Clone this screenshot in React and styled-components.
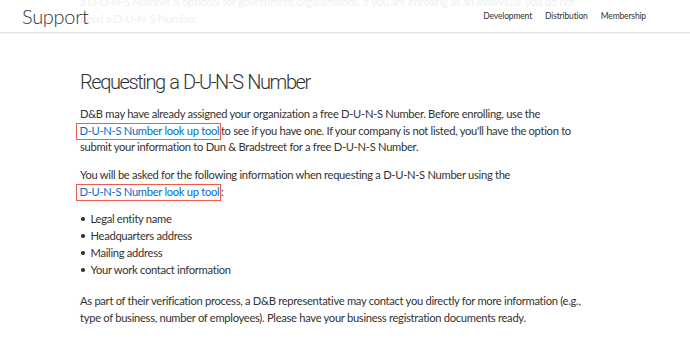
import styled, { createGlobalStyle } from "styled-components";

const GlobalStyle = createGlobalStyle`
  html, body {
    margin: 0;
    padding: 0;
    background: #fff;
  }
  body {
    font-family: "Lato", "Liberation Sans", sans-serif;
    color: #333;
  }
`;

const Page = styled.div`
  width: 690px;
  height: 359px;
  overflow: hidden;
  background: #fff;
`;

const Header = styled.header`
  position: relative;
  height: 32px;
  display: flex;
  align-items: center;
  justify-content: space-between;
  padding: 0 44px 0 22px;
  border-bottom: 1px solid #e3e3e3;
  box-shadow: 0 1px 1px rgba(0, 0, 0, 0.03);
  overflow: hidden;
`;

// page content scrolled up beneath the translucent bar
const GhostText = styled.div`
  position: absolute;
  left: 80px;
  top: -6px;
  font-size: 11.2px;
  letter-spacing: -0.3px;
  line-height: 16.5px;
  color: #f0f0f0;
  white-space: nowrap;
`;

const Brand = styled.div`
  position: relative;
  font-size: 20px;
  font-weight: 300;
  color: #333;
  letter-spacing: -0.3px;
`;

const Nav = styled.nav`
  position: relative;
  display: flex;
  gap: 13px;
  font-size: 8.5px;
  letter-spacing: -0.15px;
  color: #333;
`;

const Content = styled.main`
  padding: 34px 0 0 80px;
`;

const Title = styled.h1`
  margin: 0 0 9px;
  font-family: "Roboto", "Lato", sans-serif;
  font-size: 20px;
  font-weight: 300;
  line-height: 30px;
  letter-spacing: -1.4px;
  word-spacing: 1px;
  color: #333;
`;

const Para = styled.p`
  margin: 0 0 ${(p) => p.$gap || 11.5}px;
  font-size: 11.2px;
  letter-spacing: -0.3px;
  line-height: 16.5px;
  white-space: nowrap;
`;

const Link = styled.span`
  color: #0070c9;
  margin: 0 0 0 -4px;
  padding: 0 0.5px 2px 2.5px;
  border: 1.5px solid #ef5b4a;
`;

const List = styled.ul`
  margin: 0 0 15px;
  padding: 0;
  list-style: none;
  font-size: 11.2px;
  letter-spacing: -0.3px;
  line-height: 17px;
`;

const Item = styled.li`
  display: flex;
  align-items: center;
`;

const Dot = styled.span`
  width: 3.5px;
  height: 3.5px;
  margin: 1px 6px 0 1px;
  border-radius: 50%;
  background: #333;
`;

export default function App() {
  const items = [
    "Legal entity name",
    "Headquarters address",
    "Mailing address",
    "Your work contact information",
  ];

  return (
    <Page>
      <GlobalStyle />
      <Header>
        <GhostText>
          a D-U-N-S Number is optional for government organizations. If you
          are enrolling as an individual, you do not
          <br />
          need a D-U-N-S Number.
        </GhostText>
        <Brand>Support</Brand>
        <Nav>
          <span>Development</span>
          <span>Distribution</span>
          <span>Membership</span>
        </Nav>
      </Header>
      <Content>
        <Title>Requesting a D-U-N-S Number</Title>
        <Para>
          D&amp;B may have already assigned your organization a free D-U-N-S
          Number. Before enrolling, use the
          <br />
          <Link>D-U-N-S Number look up tool</Link>to see if you have one. If
          your company is not listed, you'll have the option to
          <br />
          submit your information to Dun &amp; Bradstreet for a free D-U-N-S
          Number.
        </Para>
        <Para $gap={10}>
          You will be asked for the following information when requesting a
          D-U-N-S Number using the
          <br />
          <Link>D-U-N-S Number look up tool</Link>:
        </Para>
        <List>
          {items.map((text) => (
            <Item key={text}>
              <Dot />
              {text}
            </Item>
          ))}
        </List>
        <Para>
          As part of their verification process, a D&amp;B representative may
          contact you directly for more information (e.g.,
          <br />
          type of business, number of employees). Please have your business
          registration documents ready.
        </Para>
      </Content>
    </Page>
  );
}
